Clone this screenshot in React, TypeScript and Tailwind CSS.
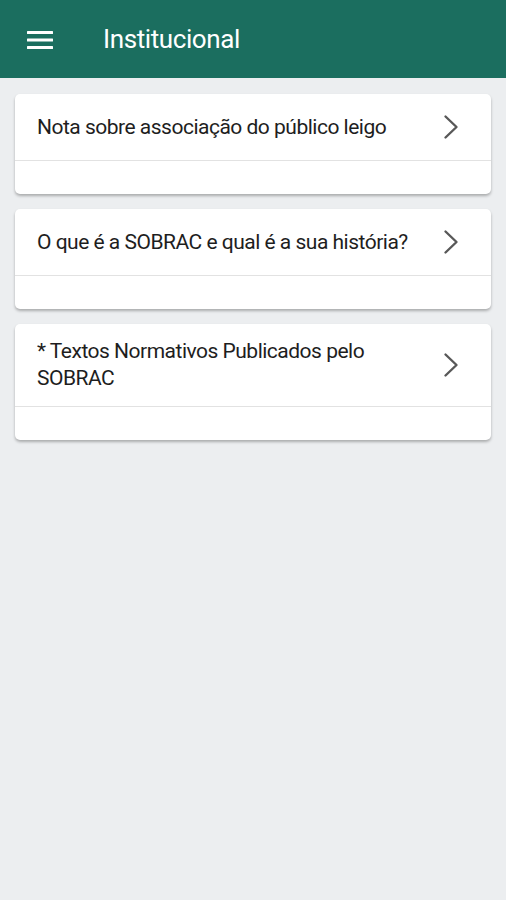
import React from "react";

const items = [
  "Nota sobre associação do público leigo",
  "O que é a SOBRAC e qual é a sua história?",
  "* Textos Normativos Publicados pelo SOBRAC",
];

const Chevron = () => (
  <svg width="16" height="26" viewBox="0 0 16 26" className="shrink-0 text-[#585858]">
    <path d="M2.5 2.5 13.5 13 2.5 23.5" fill="none" stroke="currentColor" strokeWidth="2.4" strokeLinecap="round" strokeLinejoin="round" />
  </svg>
);

export default function App() {
  return (
    <div className="min-h-[900px] w-[506px] bg-[#eceef0] font-['Roboto',sans-serif]">
      {/* Header */}
      <header className="flex h-[78px] items-center bg-[#1b6e5f] px-[27px] text-white">
        <svg width="26" height="20" viewBox="0 0 26 20" className="mt-px">
          <rect x="0" y="1" width="26" height="3" rx="0.5" fill="#fff" />
          <rect x="0" y="8.5" width="26" height="3" rx="0.5" fill="#fff" />
          <rect x="0" y="16" width="26" height="3" rx="0.5" fill="#fff" />
        </svg>
        <span className="ml-[50px] text-[26px] tracking-[-0.4px]">Institucional</span>
      </header>

      {/* Cards */}
      <div className="flex flex-col gap-[15px] px-[15px] pt-[16px]">
        {items.map((text) => (
          <div key={text} className="rounded-[5px] bg-white shadow-[0_2px_3px_rgba(0,0,0,0.28)]">
            <div className="flex min-h-[67px] items-center justify-between border-b border-[#e2e2e2] py-[14px] pl-[22px] pr-[32px]">
              <span className="max-w-[402px] text-[21px] leading-[27px] tracking-[-0.5px] text-[#1e1e1e]">{text}</span>
              <Chevron />
            </div>
            <div className="h-[33px]" />
          </div>
        ))}
      </div>
    </div>
  );
}
